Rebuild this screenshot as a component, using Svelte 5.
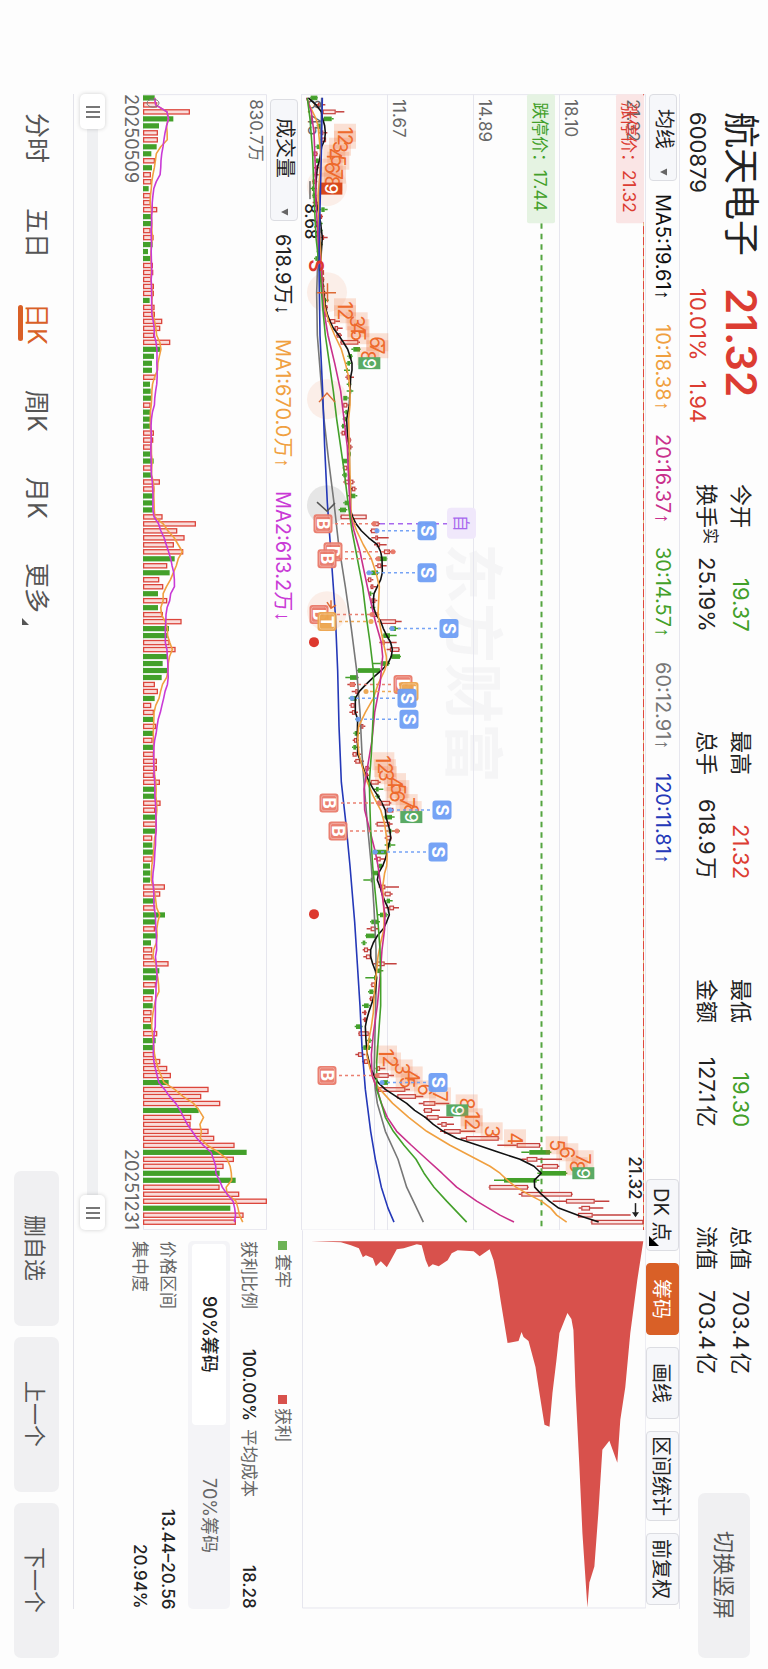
<script>
    let tab = '日K';
    let share = 90;
    let rangeFrom = 0;
    let rangeTo = 100;

    const tabs = ['分时', '五日', '日K', '周K', '月K', '更多'];

    const quotes = [
        { label: '今开', value: '19.37', color: 'green' },
        { label: '最高', value: '21.32', color: 'red' },
        { label: '最低', value: '19.30', color: 'green' },
        { label: '总值', value: '703.4亿' },
        { label: '换手', note: '实', value: '25.19%' },
        { label: '总手', value: '618.9万' },
        { label: '金额', value: '127.1亿' },
        { label: '流值', value: '703.4亿' },
    ];

    const averages = [
        { text: 'MA5:19.61', arrow: '↑', color: '#111' },
        { text: '10:18.38', arrow: '↑', color: '#f0a040' },
        { text: '20:16.37', arrow: '↑', color: '#c9308c' },
        { text: '30:14.57', arrow: '↑', color: '#43a02a' },
        { text: '60:12.91', arrow: '↑', color: '#777' },
        { text: '120:11.81', arrow: '↑', color: '#2438b8' },
    ];

    const turnover = [
        { text: '618.9万', arrow: '↓', color: '#222' },
        { text: 'MA1:670.0万', arrow: '↑', color: '#f0a040' },
        { text: 'MA2:613.2万', arrow: '↓', color: '#c93ad6' },
    ];

    // the whole screen is turned: days run down, prices run to the right
    const dayY = i => 97.7 + i * 6.983;
    const priceX = t => 290 + t / 3;

    // negative = falling day
    const volumes = [
        -35, 41, 139, -91, -48, 43, 43, -41, -25, 34, -27, 22, 24, -17, 22, 22, 41, -24, -25, 21,
        30, -29, -15, -22, 28, 29, 23, 31, 31, -20, 33, 34, 56, 50, 32, 80, -51, -33, -27, -27,
        35, -21, -23, -24, 21, -21, -21, -22, 31, 29, 23, -22, -32, 25, -26, 49, 32, -30, -29, -29,
        57, 157, 101, 123, 91, 119, -95, 71, -80, 47, 59, -45, 71, -45, 58, 114, -78, -74, 78, 96,
        -72, -59, -72, -56, 34, 43, -35, 23, 31, -31, 38, -31, 27, -33, 31, 40, 40, 31, 49, -37,
        -36, 51, 35, -38, 38, -37, 26, -28, -30, 27, -21, -22, -21, 64, 50, -35, 35, -66, -37, 34,
        -39, -24, 26, 27, 75, -49, -45, 37, -33, 27, -29, 24, 23, -26, 41, -38, -34, 34, 50, 71,
        82, -77, 195, 173, 230, -167, 143, 141, 195, 212, 273, -311, 271, 240, -230, -278, 228, 287, 370, -262,
        300, 277,
    ];
    const volumeX = v => 143 + Math.abs(v) / 3;

    // low, body low, body high, high
    const candles = [
        [60,62,82,84],[78,84,92,106],[98,98,137,163],[100,102,125,131],[80,84,92,94],[88,92,100,112],[90,94,108,108],[76,80,92,96],
        [70,70,82,84],[74,78,86,90],[72,76,84,88],[70,74,80,86],[66,68,76,82],[62,66,72,80],[66,68,76,80],[68,72,78,84],
        [90,94,104,113],[86,90,96,99],[84,88,92,98],[84,88,94,98],[88,96,99,113],[86,90,94,98],[80,82,90,96],[72,76,84,90],
        [86,90,94,98],[94,96,100,102],[94,96,100,103],[92,96,102,104],[98,100,106,112],[100,102,108,116],[104,106,110,114],[102,106,110,112],
        [112,120,136,150],[130,134,144,158],[138,140,152,156],[150,152,205,210],[184,190,210,212],[172,176,186,188],[168,172,180,184],[162,168,174,180],
        [166,170,180,192],[170,174,180,184],[170,178,182,190],[160,160,172,176],[158,160,172,176],[162,166,172,174],[158,162,168,172],[154,156,162,168],
        [152,155,165,168],[168,172,182,184],[172,176,184,188],[172,176,180,182],[156,158,172,176],[158,160,172,174],[156,160,170,172],[160,164,190,194],
        [180,186,196,200],[172,182,196,202],[160,164,176,180],[146,150,168,172],[150,152,230,230],[246,250,266,270],[240,243,262,264],[244,256,264,296],
        [252,260,270,290],[278,282,300,316],[258,264,290,292],[256,262,274,290],[230,244,264,268],[232,234,244,250],[240,242,250,260],[236,238,244,250],
        [240,244,256,262],[240,246,252,256],[240,246,264,268],[262,270,318,335],[298,302,318,330],[276,280,300,320],[268,278,284,320],[290,300,328,330],
        [300,304,330,333],[246,272,296,300],[200,204,270,272],[166,180,202,206],[172,180,194,198],[185,196,204,210],[176,182,200,202],[178,182,194,196],
        [178,186,196,204],[196,200,204,214],[208,212,220,226],[190,194,206,210],[188,192,202,206],[186,190,198,208],[186,188,200,214],[192,196,210,222],
        [224,226,236,240],[224,228,234,240],[236,242,266,272],[252,258,266,280],[256,260,266,270],[258,264,300,304],[286,290,310,312],[280,284,306,314],
        [256,260,300,308],[290,296,304,330],[284,288,304,306],[284,292,302,316],[248,250,290,292],[252,260,272,286],[262,266,276,280],[246,248,264,266],
        [220,242,244,246],[266,272,286,327],[280,284,302,308],[286,290,300,308],[286,298,312,327],[262,270,290,294],[240,244,264,270],[230,242,258,266],
        [226,228,256,258],[214,218,226,230],[218,222,234,240],[220,228,242,244],[250,258,284,320],[256,262,270,280],[226,252,256,260],[242,244,256,258],
        [234,238,250,254],[238,240,248,252],[216,222,236,240],[216,222,226,230],[218,222,228,232],[194,198,214,218],[204,206,236,240],[230,234,242,246],
        [216,220,240,246],[196,204,218,226],[216,222,234,240],[256,260,270,286],[256,260,296,312],[270,278,294,298],[258,264,346,360],[318,322,378,400],
        [386,400,436,478],[400,402,426,450],[402,410,446,490],[442,454,470,492],[450,462,512,556],[512,528,626,628],[622,680,750,752],[694,718,780,784],
        [694,710,742,816],[740,756,804,808],[742,750,828,832],[612,642,740,748],[596,598,714,716],[686,694,846,848],[788,828,914,958],[866,874,900,940],
        [862,864,908,1022],[902,904,1060,1060],
    ];
    // days whose candle closed the other way round from the volume bar
    const flipped = [8, 9, 10, 14, 16, 17, 19, 145, 159];
    const priceUp = i => (volumes[i] > 0) != flipped.includes(i);

    const lines = [
        { color: '#777', points: [[0,95],[8,92],[16,86],[22,84],[28,80],[34,82],[40,92],[46,102],[52,116],[58,132],[64,146],[70,166],[76,184],[82,200],[88,210],[94,216],[98,222],[104,232],[110,244],[116,252],[122,258],[128,258],[134,255],[140,252],[142,256],[144,262],[148,286],[152,324],[156,350],[159,380],[161,400]] },
        { color: '#111', points: [[0,55],[1,78],[2,94],[3,98],[4,104],[5,106],[6,104],[7,95],[8,92],[9,88],[10,82],[12,78],[14,76],[16,84],[18,92],[20,97],[22,94],[24,92],[26,97],[28,102],[30,106],[31,112],[32,120],[33,130],[34,146],[35,160],[36,173],[37,180],[38,186],[39,186],[40,182],[42,180],[44,178],[46,170],[48,172],[50,178],[54,178],[56,182],[59,181],[60,188],[61,198],[62,214],[63,236],[64,262],[65,272],[66,276],[68,277],[69,272],[70,262],[71,252],[72,250],[73,251],[74,258],[75,272],[76,280],[77,290],[78,302],[79,307],[80,304],[81,294],[82,274],[83,250],[84,228],[85,208],[86,196],[88,196],[89,203],[91,202],[94,203],[95,212],[97,228],[98,238],[99,250],[100,264],[101,276],[102,286],[103,288],[104,294],[105,300],[106,302],[107,296],[108,292],[109,286],[110,278],[111,266],[112,262],[113,270],[114,276],[115,284],[116,294],[117,298],[118,290],[119,280],[120,262],[121,250],[122,242],[123,242],[124,248],[125,256],[126,260],[128,256],[129,250],[131,236],[132,230],[133,226],[135,228],[137,232],[139,242],[140,252],[141,264],[142,286],[143,318],[144,350],[145,374],[146,406],[147,430],[148,460],[149,500],[150,564],[151,626],[152,690],[153,732],[154,754],[155,733],[156,734],[157,754],[158,778],[159,806],[160,862],[161,926]] },
        { color: '#f0a040', points: [[0,50],[1,58],[2,68],[3,78],[4,84],[6,88],[8,92],[10,92],[14,84],[18,88],[22,92],[26,96],[30,104],[32,116],[34,134],[36,154],[38,166],[40,176],[42,180],[44,180],[46,176],[50,178],[54,180],[58,182],[60,184],[62,200],[64,220],[66,244],[68,258],[70,268],[72,266],[74,264],[76,272],[78,280],[80,289],[81,290],[82,284],[84,264],[86,250],[88,226],[90,206],[92,203],[94,207],[96,218],[98,232],[100,250],[102,272],[104,284],[106,290],[108,292],[110,290],[111,284],[113,278],[115,280],[117,282],[119,282],[121,272],[123,264],[125,260],[127,255],[129,252],[131,250],[133,244],[135,236],[137,230],[139,240],[141,254],[142,270],[144,308],[146,356],[148,410],[150,480],[151,520],[152,560],[153,600],[154,630],[155,652],[156,678],[157,714],[158,754],[159,782],[160,800],[161,830]] },
        { color: '#c9308c', points: [[0,50],[2,64],[5,72],[10,76],[15,78],[20,84],[25,94],[30,100],[34,114],[38,134],[42,152],[46,162],[50,172],[55,176],[60,182],[62,192],[65,210],[70,232],[75,256],[78,274],[80,278],[84,270],[88,254],[92,246],[96,232],[99,222],[102,224],[105,240],[108,256],[110,264],[114,276],[117,285],[119,284],[122,276],[126,270],[130,262],[134,250],[137,244],[140,246],[142,262],[144,274],[146,292],[148,320],[150,364],[152,410],[154,456],[156,500],[158,560],[160,630],[161,672]] },
        { color: '#43a02a', points: [[0,52],[3,60],[8,68],[14,72],[20,78],[26,92],[30,98],[34,106],[38,118],[42,130],[46,140],[50,152],[54,164],[58,174],[62,186],[66,202],[70,218],[74,228],[78,240],[82,250],[86,252],[90,248],[94,244],[98,238],[102,240],[106,243],[110,248],[114,256],[118,264],[122,270],[126,272],[130,272],[134,266],[138,260],[142,260],[144,274],[146,286],[148,310],[150,342],[152,378],[154,402],[156,432],[158,470],[160,510],[161,530]] },
        { color: '#2438b8', points: [[0,97],[8,94],[16,90],[24,87],[34,90],[42,98],[50,104],[58,112],[66,124],[74,136],[82,143],[90,147],[98,154],[104,168],[110,180],[118,194],[124,202],[130,210],[136,216],[142,226],[148,242],[152,256],[156,274],[159,294],[161,312]] },
    ];

    // runs of nine: first day, then the position of every digit
    const counts = [
        { start: 5, end: '#d9481c', at: [165, 165, 150, 133, 145, 125, 135, 125, 124] },
        { start: 30, end: '#5aaa64', at: [165, 165, 200, 205, 205, 262, 262, 235, 238] },
        { start: 95, end: '#5aaa64', at: [280, 285, 288, 315, 325, 320, 350, 362, 364] },
        { start: 137, end: '#5aaa64', at: [288, 300, 335, 365, 350, 405, 450, 530, 502] },
        { start: 146, end: '#5aaa64', at: [545, 545, 605, 675, 800, 832, 878, 860, 880] },
    ];

    const BUY = '#ea7a6a';
    const SELL = '#6f9ff5';
    const TRADE = '#eda54e';
    const markers = [
        { t: 'B', x: 323, day: 61, to: 374, color: BUY },
        { t: 'S', x: 427, day: 62, to: 377, color: SELL },
        { t: 'B', x: 333, day: 65, to: 393, color: BUY },
        { t: 'B', x: 327, day: 66, to: 378, color: BUY },
        { t: 'S', x: 427, day: 68, to: 369, color: SELL },
        { t: 'B', x: 319, day: 74, to: 372, color: BUY },
        { t: 'T', x: 327, day: 75, to: 371, color: TRADE },
        { t: 'S', x: 449, day: 76, to: 392, color: SELL },
        { t: 'B', x: 403, day: 84, to: 352, color: BUY },
        { t: 'T', x: 409, day: 85, to: 366, color: TRADE },
        { t: 'S', x: 407, day: 86, to: 352, color: SELL },
        { t: 'S', x: 409, day: 89, to: 358, color: SELL },
        { t: 'B', x: 329, day: 101, to: 379, color: BUY },
        { t: 'S', x: 442, day: 102, to: 390, color: SELL },
        { t: 'B', x: 338, day: 105, to: 397, color: BUY },
        { t: 'S', x: 438, day: 108, to: 375, color: SELL },
        { t: 'B', x: 327, day: 140, to: 377, color: BUY },
        { t: 'S', x: 438, day: 141, to: 382, color: SELL },
    ];

    const chips = '310,1241 340,1242 350,1245 358,1248 362,1257 365,1255 372,1258 375,1266 380,1261 386,1267 390,1260 396,1249 403,1248 416,1244 421,1245 425,1260 428,1267 432,1264 438,1266 447,1260 451,1253 457,1250 473,1251 479,1256 489,1249 493,1260 497,1280 500,1300 507,1343 518,1341 521,1332 523,1337 528,1341 535,1367 538,1387 544,1425 549,1427 552,1393 556,1360 559,1333 567,1313 571,1319 573,1330 575,1387 579,1467 582,1533 586,1593 587,1608 589,1583 594,1567 598,1513 602,1450 609,1441 617,1463 620,1420 625,1387 630,1333 637,1280 643,1241';

    function linePoints(points) {
        return points.map(([i, t]) => `${priceX(t)},${dayY(i)}`).join(' ');
    }

    function volumeAverage(days) {
        return volumes.map((_, i) => {
            const part = volumes.slice(Math.max(0, i - days + 1), i + 1);
            const mean = part.reduce((sum, v) => sum + Math.abs(v), 0) / part.length;
            return `${volumeX(mean)},${dayY(i)}`;
        }).join(' ');
    }
</script>

{#snippet turned(text, x, y, cls)}
    <text class={cls} transform="translate({x} {y}) rotate(90)">{text}</text>
{/snippet}

{#snippet legend(items)}
    <div class="legend">
        {#each items as item}
            <span style="color: {item.color}">{item.text}<i>{item.arrow}</i></span>
        {/each}
    </div>
{/snippet}

<div class="screen">
    <header>
        <div class="ident">
            <h1>航天电子</h1>
            <span class="sub">600879</span>
        </div>
        <div class="ident red">
            <strong>21.32</strong>
            <span class="sub"><span>10.01%</span><span>1.94</span></span>
        </div>
        <dl class="quotes">
            {#each quotes as q}
                <div>
                    <dt>{q.label}{#if q.note}<sup>{q.note}</sup>{/if}</dt>
                    <dd class={q.color}>{q.value}</dd>
                </div>
            {/each}
        </dl>
        <button class="soft rotate">切换竖屏</button>
    </header>

    <div class="toolbar">
        <label class="picker">
            <select aria-label="主图指标"><option>均线</option></select>
            <svg class="caret" viewBox="0 0 8 8"><path d="M0 4 8 0V8z" /></svg>
        </label>
        {@render legend(averages)}
        <div class="tools">
            <button class="corner">DK 点<svg viewBox="0 0 10 10"><path d="M0 0V10H10z" /></svg></button>
            <button class="active">筹码</button>
            <button>画线</button>
            <button class="wide">区间统计</button>
            <button>前复权</button>
        </div>
    </div>

    <main>
        <section class="charts">
            <div class="price">
                <svg viewBox="301 94 345 1136">
                    {@render turned('东方财富', 451, 543, 'watermark')}
                    <g class="grid">
                        <path d="M387.5 94V1230M473.5 94V1230M559.5 94V1230M374.5 1060V1230" />
                        <path d="M301.5 94V1230H645.5V94.5H301" />
                    </g>
                    {@render turned('11.67', 393, 99, 'axis')}
                    {@render turned('14.89', 479, 99, 'axis')}
                    {@render turned('18.10', 565, 99, 'axis')}

                    <path d="M643.5 94V1230" stroke="#e6c58f" />
                    <path d="M643.5 94V1230" stroke="#e0483c" stroke-dasharray="8 3" />
                    <path d="M541.5 223V1230" stroke="#55a540" stroke-width="2" stroke-dasharray="5.5 5" />
                    <rect x="616" y="94" width="28" height="129" rx="2" fill="#fae5e5" />
                    {@render turned('21.32', 627, 99, 'axis')}
                    {@render turned('涨停价：21.32', 623, 102, 'tag red')}
                    <rect x="527" y="94" width="28" height="129" rx="2" fill="#e5f3e2" />
                    {@render turned('跌停价：17.44', 534, 102, 'tag green')}

                    {#each [186, 292, 399, 611] as y}
                        <circle cx="327" cy={y} r="20" fill="#fbeee8" />
                    {/each}
                    <circle cx="327" cy="505" r="20" fill="#e6e6e6" />

                    {#each candles as [low, open, close, high], i}
                        <g class={priceUp(i) ? 'up' : 'down'}>
                            <path d="M{priceX(low)} {dayY(i)}H{priceX(open)}M{priceX(close)} {dayY(i)}H{priceX(high)}" />
                            <rect x={priceX(open) + 0.5} y={dayY(i) - 1.7} width={Math.max(1, (close - open) / 3 - 1)} height="3.6" />
                        </g>
                    {/each}

                    {@render turned('8.45', 308, 99, 'axis')}
                    {@render turned('8.68', 305, 203, 'mark')}
                    <path d="M310 181V199" stroke="#222" />

                    {#each counts as run}
                        {#each run.at as t, k}
                            {#if k < 8}
                                <rect x={priceX(t) - 11} y={dayY(run.start + k) - 9} width="22" height="18" fill="#f07030" fill-opacity="0.2" />
                            {/if}
                        {/each}
                        {#each run.at as t, k}
                            {#if k < 8}
                                {@render turned(k + 1, priceX(t) - 7, dayY(run.start + k) - 6, 'digit')}
                            {:else}
                                <rect x={priceX(t) - 11} y={dayY(run.start + k) - 6} width="22" height="12" fill={run.end} />
                                {@render turned('9', priceX(t) - 6, dayY(run.start + k) - 5, 'nine')}
                            {/if}
                        {/each}
                    {/each}

                    {#each lines as line}
                        <polyline class="ma" points={linePoints(line.points)} stroke={line.color} />
                    {/each}

                    {@render turned('S', 309, 259, 'signal')}
                    <g class="hint">
                        <path d="M317 292.5H336M327.5 283V302" />
                        <path d="M319 402 327 393 335 402" />
                        <path d="M327 602 331 608 336 605M331 608V600M317 610 325 614 318 619M325 614V606" />
                        <path d="M317 502 327 511 335 503" />
                    </g>
                    <circle cx="314" cy="642" r="5" fill="#dd382e" />
                    <circle cx="314" cy="914" r="5" fill="#dd382e" />

                    <path d="M380 {dayY(61)}H448" stroke="#a868ee" stroke-width="1.5" stroke-dasharray="5 4" />
                    <rect x="447" y={dayY(61) - 16} width="29" height="31" rx="4" fill="#f0e8fb" />
                    {@render turned('自', 455, dayY(61) - 9, 'own')}

                    {#each markers as m}
                        <g opacity="0.95">
                            <path d="M{m.x} {dayY(m.day)}H{m.to}" stroke={m.color} stroke-width="1.5" stroke-dasharray="3 3" />
                            <circle cx={m.to} cy={dayY(m.day)} r="2.5" fill={m.color} />
                            <rect x={m.x - 9.5} y={dayY(m.day) - 9.5} width="19" height="19" rx="3" fill={m.color} />
                            {#if m.t != 'S'}
                                <rect x={m.x - 7.5} y={dayY(m.day) - 7.5} width="15" height="15" rx="2" fill="none" stroke="#fff" stroke-opacity="0.3" />
                            {/if}
                        </g>
                        <text class="letter" text-anchor="middle" transform="translate({m.x - 6} {dayY(m.day)}) rotate(90)">{m.t}</text>
                    {/each}

                    {@render turned('21.32', 629, 1156, 'mark')}
                    <path d="M635.5 1203V1216" stroke="#222" stroke-width="1.5" />
                    <path d="M632 1212H639L635.5 1217z" fill="#222" />
                </svg>
            </div>

            <div class="volume-bar">
                <label class="picker tall">
                    <select aria-label="副图指标"><option>成交量</option></select>
                    <svg class="caret" viewBox="0 0 8 8"><path d="M0 4 8 0V8z" /></svg>
                </label>
                {@render legend(turnover)}
            </div>

            <div class="volume">
                <svg viewBox="143 94 124 1136">
                    <path class="frame" d="M143.5 94.5H266.5V1229.5H143.5z" />
                    {@render turned('830.7万', 250, 99, 'axis')}
                    {#each volumes as v, i}
                        {#if v > 0}
                            <rect x="143.6" y={dayY(i) - 2} width={v / 3 - 0.6} height="4.2" fill="#f9dcda" stroke="#dc453b" stroke-width="1.3" />
                        {:else}
                            <rect x="143" y={dayY(i) - 2.5} width={-v / 3} height="5.2" fill="#43a02a" />
                        {/if}
                    {/each}
                    <polyline class="ma" points={volumeAverage(5)} stroke="#f0a040" />
                    <polyline class="ma" points={volumeAverage(10)} stroke="#c93ad6" />
                    <ellipse cx="153" cy="103" rx="6" ry="4" fill="none" stroke="#777" />
                </svg>
            </div>

            <div class="dates"><time>20250509</time><time>20251231</time></div>

            <div class="zoom">
                <input type="range" aria-label="开始日期" bind:value={rangeFrom} />
                <input type="range" aria-label="结束日期" bind:value={rangeTo} />
            </div>
        </section>

        <section class="side">
            <div class="price">
                <svg viewBox="301 1230 345 379">
                    <path class="frame" d="M301.5 1230V1608.5H645.5V1230" />
                    <polygon points={chips} fill="#d8514c" />
                </svg>
            </div>
            <div class="stats">
                <div class="keys"><span class="key held">套牢</span><span class="key gain">获利</span></div>
                <div class="pair">
                    <p>获利比例<b>100.00%</b></p>
                    <p>平均成本<b>18.28</b></p>
                </div>
                <div class="segments">
                    <button class:on={share == 90} on:click={() => share = 90}>90%筹码</button>
                    <button class:on={share == 70} on:click={() => share = 70}>70%筹码</button>
                </div>
                <p>价格区间<b>13.44–20.56</b></p>
                <p>集中度<b>20.94%</b></p>
            </div>
        </section>
    </main>

    <footer>
        <nav>
            {#each tabs as name}
                <button class:on={tab == name} on:click={() => tab = name}>
                    {name}{#if name == '更多'}<svg viewBox="0 0 8 8"><path d="M0 0V8H8z" /></svg>{/if}
                </button>
            {/each}
        </nav>
        <div class="actions">
            <button class="soft">删自选</button>
            <button class="soft">上一个</button>
            <button class="soft">下一个</button>
        </div>
    </footer>
</div>

<style>
    :global(body) {
        margin: 0;
        background: #fdfdfd;
    }
    .screen {
        writing-mode: vertical-rl;
        text-orientation: sideways;
        display: flex;
        flex-direction: column;
        width: 100%;
        height: 100vh;
        box-sizing: border-box;
        font-family: Inter, "Noto Sans CJK SC", sans-serif;
        font-size: 20px;
        color: #222;
    }
    .screen * {
        box-sizing: border-box;
    }
    button, select, input {
        writing-mode: inherit;
        text-orientation: inherit;
        font: inherit;
        color: inherit;
        margin: 0;
        padding: 0;
        border: 0;
        background: none;
        cursor: pointer;
    }
    h1, dl, dd, p {
        margin: 0;
    }
    svg {
        display: block;
        writing-mode: horizontal-tb;
    }
    .red {
        color: #dc3c32;
        fill: #dc3c32;
    }
    .green {
        color: #43a02a;
        fill: #43a02a;
    }
    .soft {
        background: #f0f0f2;
        border-radius: 7px;
        color: #555;
        font-size: 22px;
        height: 155px;
    }

    /* quote header */
    header {
        flex: none;
        width: 88px;
        display: grid;
        grid-template-columns: 176px 196px 1fr 165px;
        padding: 112px 10px 11px 0;
        font-size: 22px;
        line-height: 34px;
        white-space: nowrap;
    }
    h1 {
        font-size: 36px;
        font-weight: 400;
        line-height: 34px;
    }
    .ident strong {
        display: block;
        font-size: 42px;
        font-weight: 600;
    }
    .sub {
        display: flex;
        gap: 20px;
        margin-right: 9px;
    }
    .quotes {
        display: grid;
        grid-template-columns: repeat(4, 1fr);
        grid-template-rows: 34px 34px;
        column-gap: 99px;
        margin-bottom: 119px;
        text-autospace: normal;
    }
    .quotes div {
        display: flex;
        justify-content: space-between;
    }
    sup {
        font-size: 16px;
        line-height: 0;
        vertical-align: 6px;
    }
    .rotate {
        width: 52px;
        height: 165px;
        margin-right: 8px;
    }

    /* indicator bar */
    .toolbar {
        flex: none;
        width: 34px;
        margin: 94px 0 60px;
        border-right: 1px solid #e6e6ee;
        display: flex;
        align-items: center;
    }
    .picker {
        position: relative;
        width: 28px;
        height: 87px;
        flex: none;
    }
    .picker.tall {
        height: 122px;
    }
    select {
        appearance: none;
        width: 100%;
        height: 100%;
        padding: 14px 0 0;
        border: 1px solid #dcdde2;
        border-radius: 4px;
        background: #f6f7fa;
    }
    .tall select {
        padding-top: 18px;
    }
    .caret {
        position: absolute;
        bottom: 5px;
        left: 11px;
        width: 7px;
        height: 8px;
        fill: #666;
    }
    .legend {
        display: flex;
        gap: 24px;
        margin-top: 13px;
        white-space: nowrap;
    }
    .legend i {
        font-family: "Liberation Sans", sans-serif;
        font-style: normal;
    }
    .tools {
        display: flex;
        gap: 12px;
        margin-top: auto;
        margin-bottom: 4px;
        height: 426px;
        align-self: stretch;
    }
    .tools button {
        position: relative;
        flex: 1;
        border: 1px solid #dcdde2;
        border-radius: 4px;
        background: #f6f7fa;
        white-space: nowrap;
    }
    .tools .wide {
        flex: none;
        height: 90px;
    }
    .tools .active {
        background: #d96027;
        border-color: #d96027;
        color: #fff;
    }
    .corner svg {
        position: absolute;
        left: 2px;
        bottom: 4px;
        width: 10px;
        height: 10px;
    }

    /* charts */
    main {
        flex: 1;
        min-width: 0;
        margin: 94px 0 60px;
        border-left: 1px solid #e3e3ea;
        display: grid;
        grid-template-columns: 3fr 1fr;
    }
    .charts, .side {
        display: flex;
        flex-direction: column;
        min-height: 0;
        min-width: 0;
    }
    .price {
        flex: 345 1 0;
        min-width: 0;
    }
    .volume {
        flex: 124 1 0;
        min-width: 0;
    }
    .price svg, .volume svg {
        width: 100%;
        height: 100%;
    }
    .frame, .grid path {
        fill: none;
        stroke: #e6e6ee;
    }
    .watermark {
        font-size: 60px;
        font-weight: 700;
        fill: #f5f5f6;
    }
    .axis {
        font-size: 17px;
        fill: #666;
    }
    .tag {
        font-size: 17px;
    }
    .mark {
        font-size: 17px;
        font-weight: 500;
        fill: #222;
    }
    .digit {
        font-size: 20px;
        fill: #ee6a2c;
    }
    .nine {
        font-size: 17px;
        font-weight: 500;
        fill: #fff;
    }
    .signal {
        font-size: 20px;
        font-weight: 600;
        fill: #dd382e;
    }
    .own {
        font-size: 17px;
        fill: #a868ee;
    }
    .letter {
        font-size: 17px;
        font-weight: 700;
        fill: #fff;
    }
    .up path {
        stroke: #c4423f;
        stroke-width: 1.5;
    }
    .up rect {
        fill: #fbe3e1;
        stroke: #c4423f;
        stroke-width: 1.2;
    }
    .down path {
        stroke: #43a02a;
        stroke-width: 1.5;
    }
    .down rect {
        fill: #43a02a;
        stroke: #43a02a;
    }
    .ma {
        fill: none;
        stroke-width: 1.6;
        stroke-linejoin: round;
    }
    .hint path {
        fill: none;
        stroke: #dd6a35;
        stroke-width: 1.5;
    }
    .hint path:last-child {
        stroke: #555;
    }
    .volume-bar {
        flex: none;
        width: 34px;
        display: flex;
        align-items: center;
        padding-top: 5px;
    }
    .dates {
        flex: none;
        width: 20px;
        display: flex;
        justify-content: space-between;
        font-size: 18px;
        line-height: 24px;
        color: #666;
    }
    .zoom {
        flex: none;
        width: 25px;
        margin: 0 18px 0 6px;
        display: grid;
        background: linear-gradient(#eff0f2, #eff0f2) center / 11px 100% no-repeat;
    }
    .zoom input {
        grid-area: 1 / 1;
        appearance: none;
        width: 25px;
        height: 100%;
        pointer-events: none;
    }
    .zoom input::-webkit-slider-thumb {
        appearance: none;
        pointer-events: auto;
        width: 25px;
        height: 35px;
        border-radius: 5px;
        box-shadow: 0 0 4px rgba(0, 0, 0, 0.18);
        background:
            linear-gradient(#777 2px, transparent 2px 5px, #777 5px 7px, transparent 7px 10px, #777 10px 12px) center / 14px 12px no-repeat,
            #fff;
    }

    /* chip distribution */
    .stats {
        flex: 124 1 104px;
        min-width: 0;
        padding-top: 11px;
        font-size: 17px;
        line-height: 28px;
        color: #666;
        white-space: nowrap;
    }
    .keys {
        display: grid;
        grid-template-columns: 154px 1fr;
        line-height: 38px;
    }
    .key {
        display: flex;
        align-items: center;
        gap: 4px;
    }
    .key::before {
        content: "";
        width: 9px;
        height: 9px;
    }
    .held::before {
        background: #6db356;
    }
    .gain::before {
        background: #d8514c;
    }
    .pair {
        display: grid;
        grid-template-columns: 1fr 1fr;
        column-gap: 8px;
        line-height: 30px;
    }
    .stats p {
        display: flex;
        justify-content: space-between;
    }
    .stats b {
        font-weight: 500;
        color: #222;
    }
    .segments {
        display: grid;
        grid-template-columns: 1fr 1fr;
        width: 42px;
        margin: 0 4px 0 6px;
        padding: 3px 4px;
        border-radius: 5px;
        background: #f4f4f7;
        font-size: 18px;
    }
    .segments button {
        border-radius: 4px;
    }
    .segments .on {
        background: #fff;
        color: #222;
        font-weight: 500;
    }

    /* periods and actions */
    footer {
        flex: none;
        width: 73px;
        display: flex;
        align-items: center;
        justify-content: space-between;
        padding: 113px 0 11px;
    }
    nav {
        display: flex;
        gap: 45px;
        font-size: 25px;
        line-height: 38px;
        color: #555;
    }
    nav button {
        position: relative;
        white-space: nowrap;
    }
    nav svg {
        position: absolute;
        left: 4px;
        bottom: -12px;
        width: 7px;
        height: 7px;
        fill: #555;
    }
    nav .on {
        color: #d96027;
    }
    nav .on::after {
        content: "";
        position: absolute;
        left: 0;
        top: 2px;
        bottom: 4px;
        width: 5px;
        border-radius: 3px;
        background: #d96027;
    }
    .actions {
        display: flex;
        gap: 11px;
    }
    .actions button {
        width: 45px;
    }
</style>
